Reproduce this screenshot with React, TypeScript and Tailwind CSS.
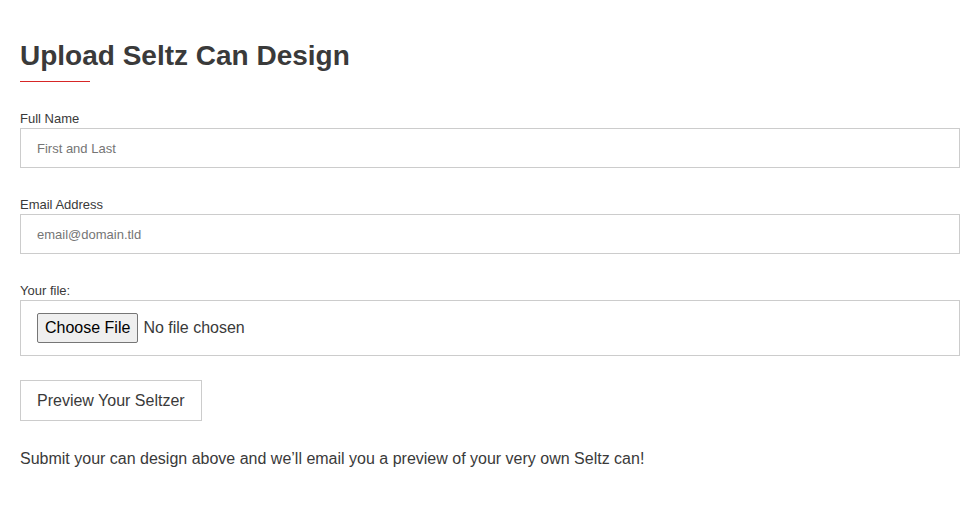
import { useState } from "react";

const inputClass =
  "block w-full h-[40px] border border-[#cccccc] bg-white px-4 text-[13px] text-[#3a3a3a] placeholder:text-[#757575] outline-none";

const App = () => {
  const [name, setName] = useState("");
  const [email, setEmail] = useState("");

  return (
    <div className="min-h-screen bg-white font-['Liberation_Sans',Arial,sans-serif] text-[#3a3a3a]">
      <form
        className="w-[940px] ml-5 pt-[39px]"
        onSubmit={(e) => e.preventDefault()}
      >
        {/* Heading */}
        <h1 className="text-[28px] leading-[34px] font-bold text-[#3a3a3a]">
          Upload Seltz Can Design
        </h1>
        <div className="mt-2 h-px w-[70px] bg-[#d72626]" />

        {/* Full Name */}
        <label className="block mt-[29px] mb-[1px] text-[13px] leading-4">
          Full Name
        </label>
        <input
          type="text"
          value={name}
          onChange={(e) => setName(e.target.value)}
          placeholder="First and Last"
          className={inputClass}
        />

        {/* Email */}
        <label className="block mt-[29px] mb-[1px] text-[13px] leading-4">
          Email Address
        </label>
        <input
          type="email"
          value={email}
          onChange={(e) => setEmail(e.target.value)}
          placeholder="email@domain.tld"
          className={inputClass}
        />

        {/* File */}
        <label className="block mt-[29px] mb-[1px] text-[13px] leading-4">
          Your file:
        </label>
        <div className="flex items-center h-[56px] border border-[#cccccc] px-4">
          <input
            type="file"
            className="text-[16px] text-[#3a3a3a] file:mr-[5px] file:h-[30px] file:px-[7px] file:text-[16px] file:text-black file:bg-[#efefef] file:border file:border-[#767676] file:rounded-[2px]"
          />
        </div>

        {/* Submit */}
        <button
          type="submit"
          className="mt-6 h-[41px] px-4 border border-[#cccccc] bg-white text-[16px] text-[#3a3a3a]"
        >
          Preview Your Seltzer
        </button>

        <p className="mt-[26px] text-[16px] leading-6">
          Submit your can design above and we’ll email you a preview of your
          very own Seltz can!
        </p>
      </form>
    </div>
  );
};

export default App;
